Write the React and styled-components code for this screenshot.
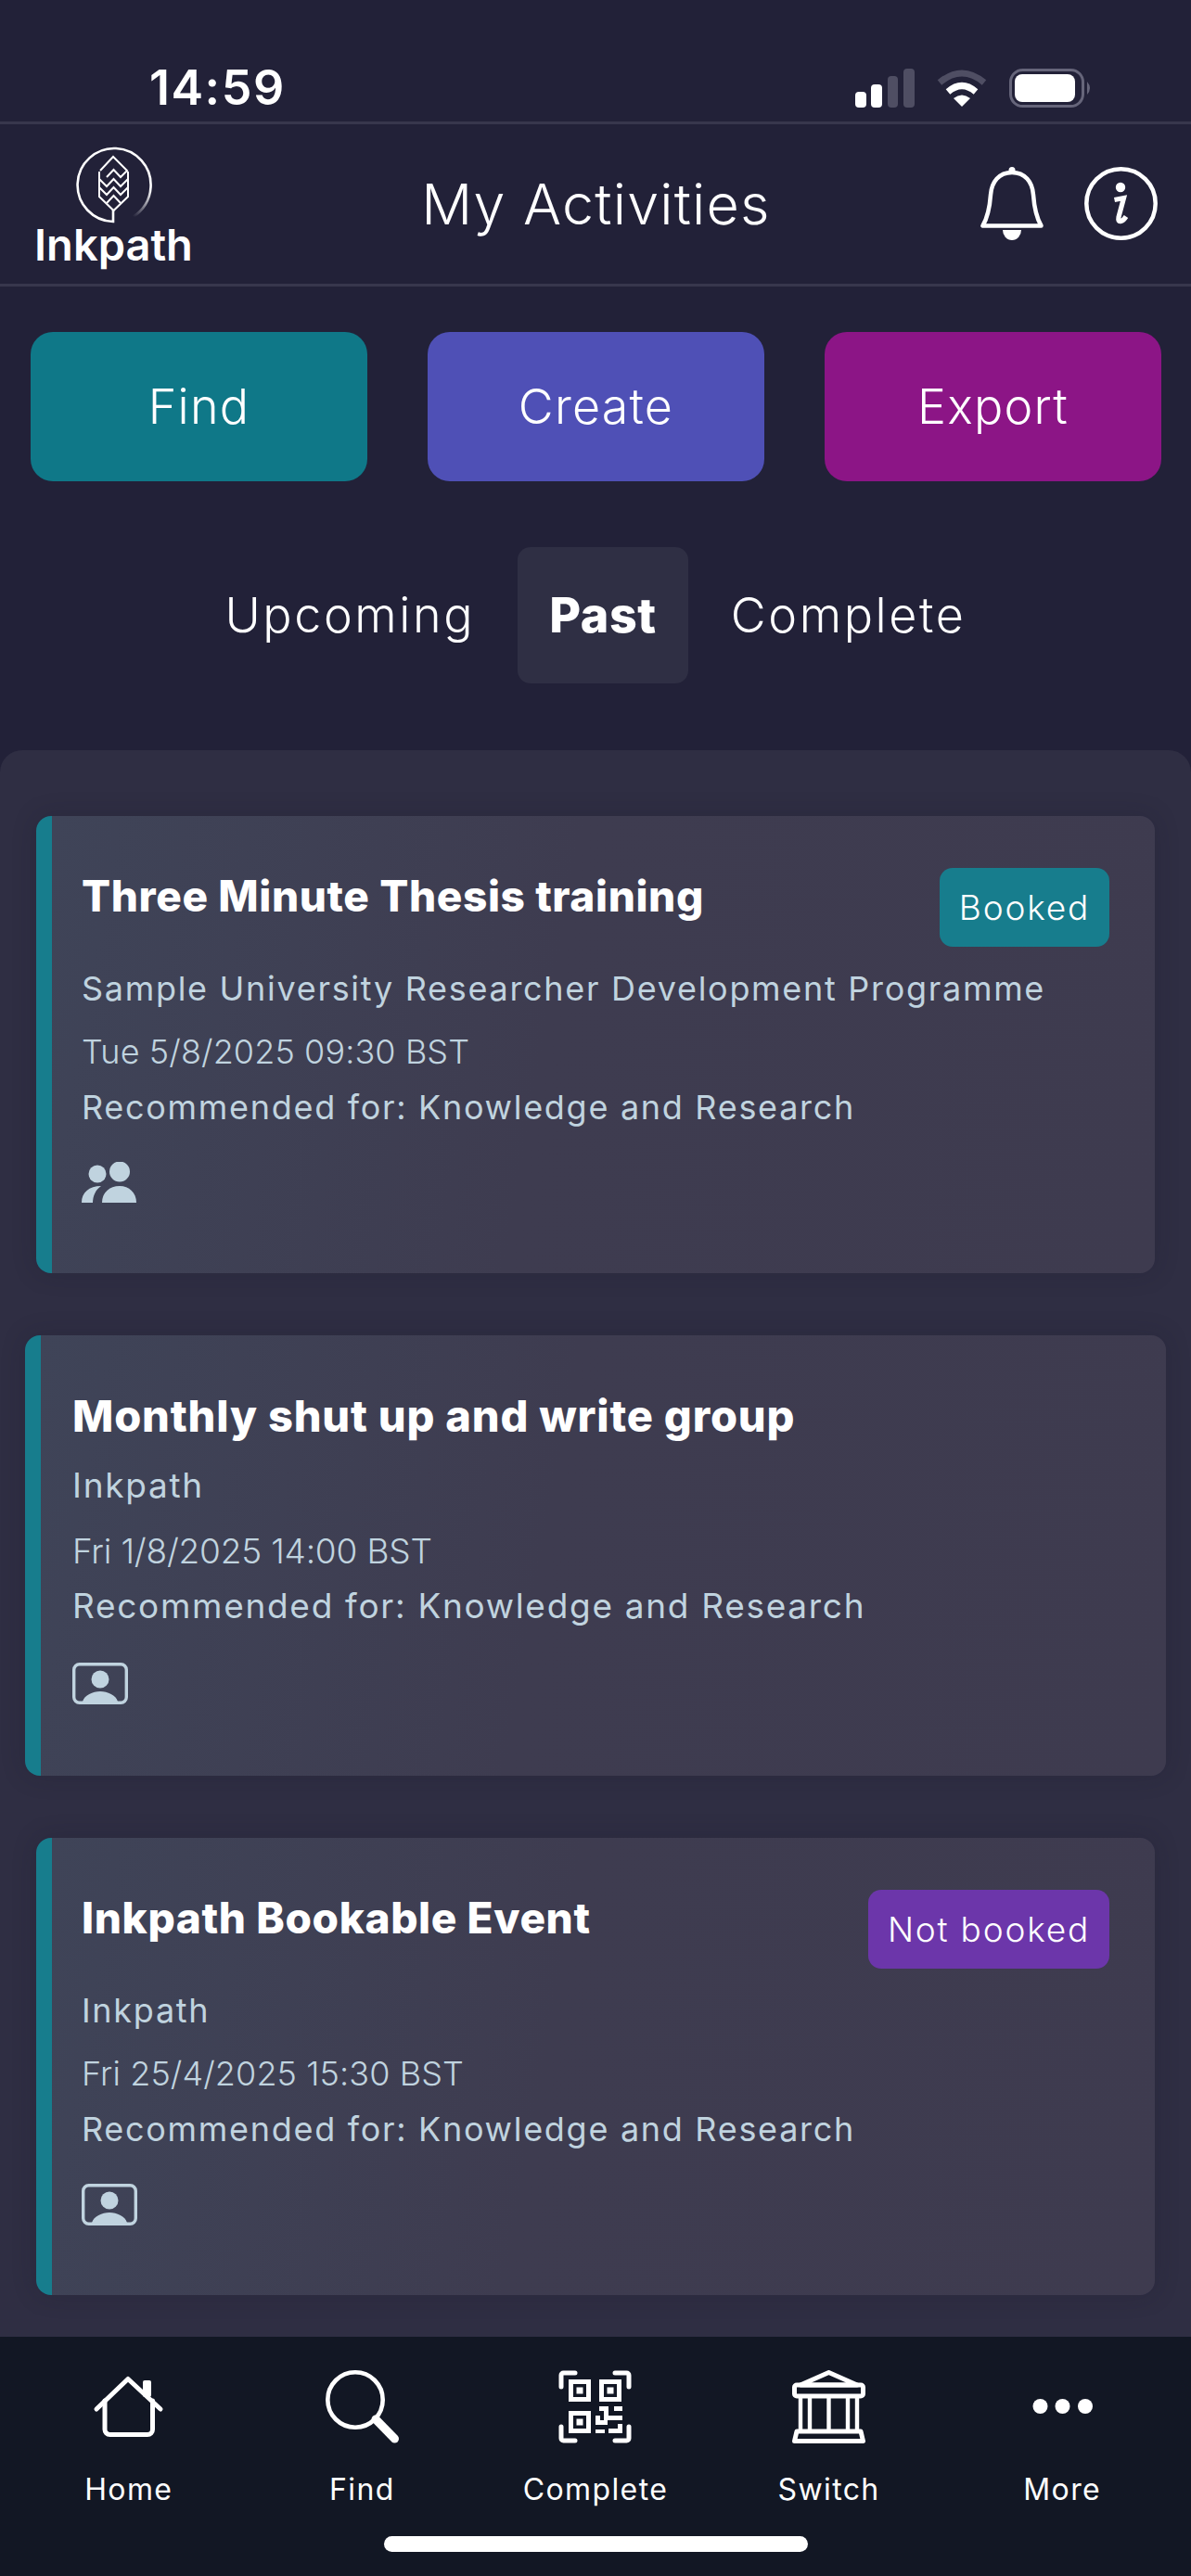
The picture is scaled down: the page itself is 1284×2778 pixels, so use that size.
import styled, { createGlobalStyle } from "styled-components";

const GlobalStyle = createGlobalStyle`
  html, body {
    margin: 0;
    padding: 0;
    background: #222138;
  }
  * {
    box-sizing: border-box;
  }
`;

const Page = styled.div`
  width: 1284px;
  height: 2778px;
  display: flex;
  flex-direction: column;
  background: #222138;
  color: #fff;
  font-family: Inter, "Noto Sans", sans-serif;
  overflow: hidden;
`;

const StatusBar = styled.div`
  height: 134px;
  flex: none;
  display: flex;
  justify-content: space-between;
  align-items: flex-start;
  padding: 74px 106px 0 161px;
  border-bottom: 3px solid #38374d;
`;
const Time = styled.div`
  font-size: 52px;
  font-weight: 600;
  line-height: 42px;
  letter-spacing: 1.5px;
`;
const StatusIcons = styled.div`
  display: flex;
  align-items: flex-start;
  gap: 24px;
`;

const Header = styled.header`
  height: 175px;
  flex: none;
  display: grid;
  grid-template-columns: 1fr auto 1fr;
  align-items: center;
  padding: 0 36px 0 37px;
  border-bottom: 3px solid #38374d;
`;
const Logo = styled.div`
  display: flex;
  flex-direction: column;
  align-items: center;
  width: 171px;
  margin-top: 7px;
`;
const LogoText = styled.div`
  font-size: 47px;
  font-weight: 600;
  line-height: 50px;
  margin-top: -3px;
  letter-spacing: 0;
`;
const Title = styled.h1`
  margin: 0;
  font-size: 61px;
  font-weight: 300;
  line-height: 80px;
  letter-spacing: 1.2px;
`;
const HeaderActions = styled.div`
  display: flex;
  justify-content: flex-end;
  align-items: center;
  gap: 44px;
  margin-top: -2px;
`;

const Actions = styled.div`
  display: flex;
  flex: none;
  justify-content: space-between;
  padding: 49px 32px 0 33px;
`;
const ActionButton = styled.button`
  width: 363px;
  height: 161px;
  border: 0;
  border-radius: 24px;
  background: ${(p) => p.$bg};
  color: #fff;
  font-family: inherit;
  font-size: 52px;
  font-weight: 300;
  letter-spacing: 1.2px;
`;

const Tabs = styled.nav`
  display: flex;
  flex: none;
  justify-content: center;
  align-items: center;
  gap: 46px;
  margin-top: 71px;
`;
const Tab = styled.div`
  height: 147px;
  display: flex;
  align-items: center;
  padding: 0 ${(p) => (p.$active ? "34px" : "0")};
  border-radius: 14px;
  background: ${(p) => (p.$active ? "#2f2f44" : "transparent")};
  font-size: 52px;
  font-weight: ${(p) => (p.$active ? 800 : 300)};
  letter-spacing: ${(p) => (p.$active ? "0.6px" : "2.6px")};
`;

const Panel = styled.main`
  flex: 1;
  display: flex;
  flex-direction: column;
  gap: 67px;
  margin-top: 72px;
  padding-top: 71px;
  border-radius: 24px 24px 0 0;
  background: #2f2e43;
  overflow: hidden;
`;

const Card = styled.article`
  margin: 0 ${(p) => (p.$focused ? "27px" : "39px")};
  padding: ${(p) => (p.$focused ? "57px" : "56px")} 49px 0 ${(p) => (p.$focused ? "34px" : "32px")};
  height: ${(p) => (p.$focused ? "475px" : "493px")};
  flex: none;
  border-left: 17px solid #177d8d;
  border-radius: 16px;
  background: linear-gradient(100deg, #3f4458 0%, #3e3c50 45%, #3e3b4f 100%);
  box-shadow: 0 0 26px rgba(24, 23, 40, 0.22);
`;
const CardHead = styled.div`
  display: flex;
  justify-content: space-between;
  align-items: flex-start;
`;
const CardTitle = styled.h2`
  margin: 0;
  font-size: ${(p) => (p.$focused ? "47px" : "46px")};
  font-weight: 800;
  line-height: 60px;
  letter-spacing: ${(p) => (p.$focused ? "0.8px" : "0.6px")};
`;
const Badge = styled.span`
  height: 85px;
  display: flex;
  align-items: center;
  padding: 0 21px;
  border-radius: 14px;
  background: ${(p) => p.$bg};
  font-size: 37px;
  font-weight: 300;
  letter-spacing: 1.8px;
`;
const MetaLine = styled.div`
  margin-top: ${(p) => p.$top}px;
  font-size: ${(p) => (p.$focused ? "37px" : "36px")};
  font-weight: 400;
  line-height: 50px;
  letter-spacing: 1.7px;
  color: #c0d3df;
`;
const DateLine = styled(MetaLine)`
  font-weight: 350;
  letter-spacing: ${(p) => (p.$focused ? "-0.2px" : "0.1px")};
`;
const FormatIcon = styled.div`
  display: flex;
  margin-top: ${(p) => (p.$focused ? "36px" : "34px")};
`;

const BottomNav = styled.footer`
  height: 258px;
  flex: none;
  display: flex;
  flex-direction: column;
  padding: 36px 13px 0;
  background: #121724;
`;
const NavGrid = styled.div`
  display: grid;
  grid-template-columns: repeat(5, 1fr);
`;
const NavItem = styled.div`
  display: flex;
  flex-direction: column;
  align-items: center;
`;
const NavLabel = styled.span`
  margin-top: 30px;
  font-size: 32px;
  font-weight: 400;
  line-height: 40px;
  letter-spacing: 1.4px;
`;
const HomeIndicator = styled.div`
  width: 457px;
  height: 17px;
  margin-top: 30px;
  align-self: center;
  border-radius: 9px;
  background: #fff;
`;

function SignalIcon() {
  return (
    <svg width="64" height="42" viewBox="0 0 64 42">
      <rect x="0" y="25" width="12" height="17" rx="4" fill="#fff" />
      <rect x="17" y="17" width="12" height="25" rx="4" fill="#fff" />
      <rect x="35" y="8" width="11" height="34" rx="4" fill="#4f4e63" />
      <rect x="52" y="0" width="12" height="42" rx="4" fill="#4f4e63" />
    </svg>
  );
}

function WifiIcon() {
  return (
    <svg width="54" height="42" viewBox="0 0 54 42" fill="none">
      <path d="M3 15 Q27 -5 51 15" stroke="#4f4e63" strokeWidth="7" />
      <path d="M12 25 Q27 12 42 25" stroke="#fff" strokeWidth="7" />
      <path d="M27 41 L18 32 Q27 25 36 32 Z" fill="#fff" />
    </svg>
  );
}

function BatteryIcon() {
  return (
    <svg width="90" height="42" viewBox="0 0 90 42" fill="none">
      <rect x="1.5" y="1.5" width="78" height="39" rx="13" stroke="#66657a" strokeWidth="3" />
      <rect x="6" y="6" width="65" height="30" rx="8" fill="#fff" />
      <path d="M84 14 Q90 21 84 28 Z" fill="#66657a" />
    </svg>
  );
}

function LogoMark() {
  return (
    <svg width="82" height="84" viewBox="0 0 82 84" fill="none">
      <defs>
        <linearGradient id="logoFade" gradientUnits="userSpaceOnUse" x1="80" y1="46" x2="62" y2="76">
          <stop offset="0" stopColor="#fff" />
          <stop offset="1" stopColor="#fff" stopOpacity="0" />
        </linearGradient>
      </defs>
      <path d="M40 68 V81 A39.5 39.5 0 1 1 80.5 44" stroke="#fff" strokeWidth="2.6" />
      <path d="M80.5 44 A39.5 39.5 0 0 1 61 76" stroke="url(#logoFade)" strokeWidth="2.6" />
      <g stroke="#fff" strokeWidth="2">
        <path d="M26 26 L40 11 L55 26 L48 33 L40.5 25 L33 33" />
        <path d="M25 27 V54 L40.5 69 L56 54 V27" />
        <path d="M25 35 L33 43 L40.5 35 L48 43 L56 35" />
        <path d="M25 44 L33 52 L40.5 44 L48 52 L56 44" />
        <path d="M33 61 L40.5 53 L48 61" />
      </g>
    </svg>
  );
}

function BellIcon() {
  return (
    <svg width="68" height="79" viewBox="0 0 68 79" fill="none">
      <circle cx="34" cy="3.5" r="3.5" fill="#fff" />
      <path
        d="M34 6 C20 6 12 16 11 30 C10 44 8 54 2.5 63.5 H65.5 C60 54 58 44 57 30 C56 16 48 6 34 6 Z"
        stroke="#fff"
        strokeWidth="4.5"
        strokeLinejoin="round"
      />
      <path d="M24 68 H44 A10 11 0 0 1 24 68 Z" fill="#fff" />
    </svg>
  );
}

function InfoIcon() {
  return (
    <svg width="79" height="79" viewBox="0 0 79 79" fill="none">
      <circle cx="39.5" cy="39.5" r="37.2" stroke="#fff" strokeWidth="4.5" />
      <circle cx="39" cy="22" r="5.2" fill="#fff" />
      <path
        d="M32.5 35.5 L42.5 33.5 L37 54 Q36 59.5 39.5 58.5 Q42.5 57.5 45 53.5"
        stroke="#fff"
        strokeWidth="5.2"
      />
    </svg>
  );
}

function PeopleIcon() {
  return (
    <svg width="59" height="44" viewBox="0 0 59 44" fill="#c0d3df">
      <circle cx="17" cy="13" r="9.5" />
      <circle cx="41" cy="10.5" r="11" />
      <path d="M22 44 C22 33 30 26 41 26 C51 26 59 33 59 44 Z" />
      <path d="M0 44 C0 33 8 26 21 26 C15 30 12 37 12 44 Z" />
    </svg>
  );
}

function PersonFrameIcon() {
  return (
    <svg width="60" height="45" viewBox="0 0 60 45" fill="none">
      <rect x="1.7" y="1.7" width="56.6" height="41.6" rx="6" stroke="#c0d3df" strokeWidth="3.4" />
      <circle cx="30" cy="18" r="9.5" fill="#c0d3df" />
      <path d="M11 42 C13 35 22 31 30 31 C38 31 47 35 49 42 Z" fill="#c0d3df" />
    </svg>
  );
}

function HomeIcon() {
  return (
    <svg width="79" height="79" viewBox="0 0 79 79" fill="none" stroke="#fff" strokeWidth="5" strokeLinecap="round" strokeLinejoin="round">
      <rect x="55" y="11" width="9" height="18" rx="2" fill="#fff" stroke="none" />
      <path d="M5 42 L39 9.5 L74 42" />
      <path d="M14 33 V64 a5.5 5.5 0 0 0 5.5 5.5 H60 a5.5 5.5 0 0 0 5.5 -5.5 V33" />
    </svg>
  );
}

function SearchIcon() {
  return (
    <svg width="79" height="79" viewBox="0 0 79 79" fill="none" stroke="#fff" strokeLinecap="round">
      <circle cx="32" cy="32" r="29.7" strokeWidth="4.6" />
      <path d="M54 53 L74.5 74" strokeWidth="9" />
    </svg>
  );
}

function QrIcon() {
  return (
    <svg width="79" height="79" viewBox="0 0 79 79" fill="none" stroke="#fff" strokeWidth="5" strokeLinecap="round">
      <path d="M3 18 V5.5 a2.5 2.5 0 0 1 2.5 -2.5 H18" />
      <path d="M61 3 H73.5 a2.5 2.5 0 0 1 2.5 2.5 V18" />
      <path d="M3 61 V73.5 a2.5 2.5 0 0 0 2.5 2.5 H18" />
      <path d="M76 61 V73.5 a2.5 2.5 0 0 1 -2.5 2.5 H61" />
      <g strokeLinecap="butt">
        <rect x="13.5" y="12.5" width="19" height="19" />
        <rect x="46.5" y="12.5" width="19" height="19" />
        <rect x="13.5" y="46.5" width="19" height="19" />
      </g>
      <g fill="#fff" stroke="none">
        <rect x="19.5" y="18.5" width="7" height="7" />
        <rect x="52.5" y="18.5" width="7" height="7" />
        <rect x="19.5" y="52.5" width="7" height="7" />
        <rect x="44" y="39" width="10" height="5" />
        <rect x="60" y="39" width="9" height="5" />
        <rect x="49" y="44" width="5" height="10" />
        <rect x="53" y="49" width="16" height="5" />
        <rect x="40" y="49" width="5" height="10" />
        <rect x="40" y="54" width="13" height="5" />
        <rect x="64" y="58" width="5" height="6" />
        <rect x="40" y="64" width="10" height="4" />
        <rect x="54" y="63" width="15" height="5" />
      </g>
    </svg>
  );
}

function BankIcon() {
  return (
    <svg width="79" height="79" viewBox="0 0 79 79" fill="none" stroke="#fff" strokeWidth="5" strokeLinejoin="round">
      <path d="M39.5 2.5 L9 16 H70 Z" />
      <rect x="2.5" y="16" width="74" height="12" rx="2.5" />
      <path d="M9 28 V66 M19 28 V66 M39.5 28 V66 M60 28 V66 M70 28 V66" strokeWidth="4.4" />
      <path d="M5 66 H74 L76.5 76.5 H2.5 Z" />
    </svg>
  );
}

function MoreIcon() {
  return (
    <svg width="79" height="79" viewBox="0 0 79 79" fill="#fff">
      <circle cx="15.5" cy="39" r="8" />
      <circle cx="39.5" cy="39" r="8" />
      <circle cx="64" cy="39" r="8" />
    </svg>
  );
}

const activities = [
  {
    title: "Three Minute Thesis training",
    provider: "Sample University Researcher Development Programme",
    date: "Tue 5/8/2025 09:30 BST",
    badge: { label: "Booked", bg: "#177d8d" },
    Icon: PeopleIcon,
  },
  {
    title: "Monthly shut up and write group",
    provider: "Inkpath",
    date: "Fri 1/8/2025 14:00 BST",
    focused: true,
    Icon: PersonFrameIcon,
  },
  {
    title: "Inkpath Bookable Event",
    provider: "Inkpath",
    date: "Fri 25/4/2025 15:30 BST",
    badge: { label: "Not booked", bg: "#6c36aa" },
    Icon: PersonFrameIcon,
  },
];

const navItems = [
  { label: "Home", Icon: HomeIcon },
  { label: "Find", Icon: SearchIcon },
  { label: "Complete", Icon: QrIcon },
  { label: "Switch", Icon: BankIcon },
  { label: "More", Icon: MoreIcon },
];

export default function App() {
  return (
    <Page>
      <GlobalStyle />
      <StatusBar>
        <Time>14:59</Time>
        <StatusIcons>
          <SignalIcon />
          <WifiIcon />
          <BatteryIcon />
        </StatusIcons>
      </StatusBar>
      <Header>
        <Logo>
          <LogoMark />
          <LogoText>Inkpath</LogoText>
        </Logo>
        <Title>My Activities</Title>
        <HeaderActions>
          <BellIcon />
          <InfoIcon />
        </HeaderActions>
      </Header>
      <Actions>
        <ActionButton $bg="#0f7888">Find</ActionButton>
        <ActionButton $bg="#4f50b6">Create</ActionButton>
        <ActionButton $bg="#8c1586">Export</ActionButton>
      </Actions>
      <Tabs>
        <Tab>Upcoming</Tab>
        <Tab $active>Past</Tab>
        <Tab>Complete</Tab>
      </Tabs>
      <Panel>
        {activities.map((a) => (
          <Card key={a.title} $focused={a.focused}>
            <CardHead>
              <CardTitle $focused={a.focused}>{a.title}</CardTitle>
              {a.badge && <Badge $bg={a.badge.bg}>{a.badge.label}</Badge>}
            </CardHead>
            <MetaLine $focused={a.focused} $top={20}>{a.provider}</MetaLine>
            <DateLine $focused={a.focused} $top={a.focused ? 21 : 18}>{a.date}</DateLine>
            <MetaLine $focused={a.focused} $top={a.focused ? 9 : 10}>
              Recommended for: Knowledge and Research
            </MetaLine>
            <FormatIcon $focused={a.focused}>
              <a.Icon />
            </FormatIcon>
          </Card>
        ))}
      </Panel>
      <BottomNav>
        <NavGrid>
          {navItems.map((n) => (
            <NavItem key={n.label}>
              <n.Icon />
              <NavLabel>{n.label}</NavLabel>
            </NavItem>
          ))}
        </NavGrid>
        <HomeIndicator />
      </BottomNav>
    </Page>
  );
}
